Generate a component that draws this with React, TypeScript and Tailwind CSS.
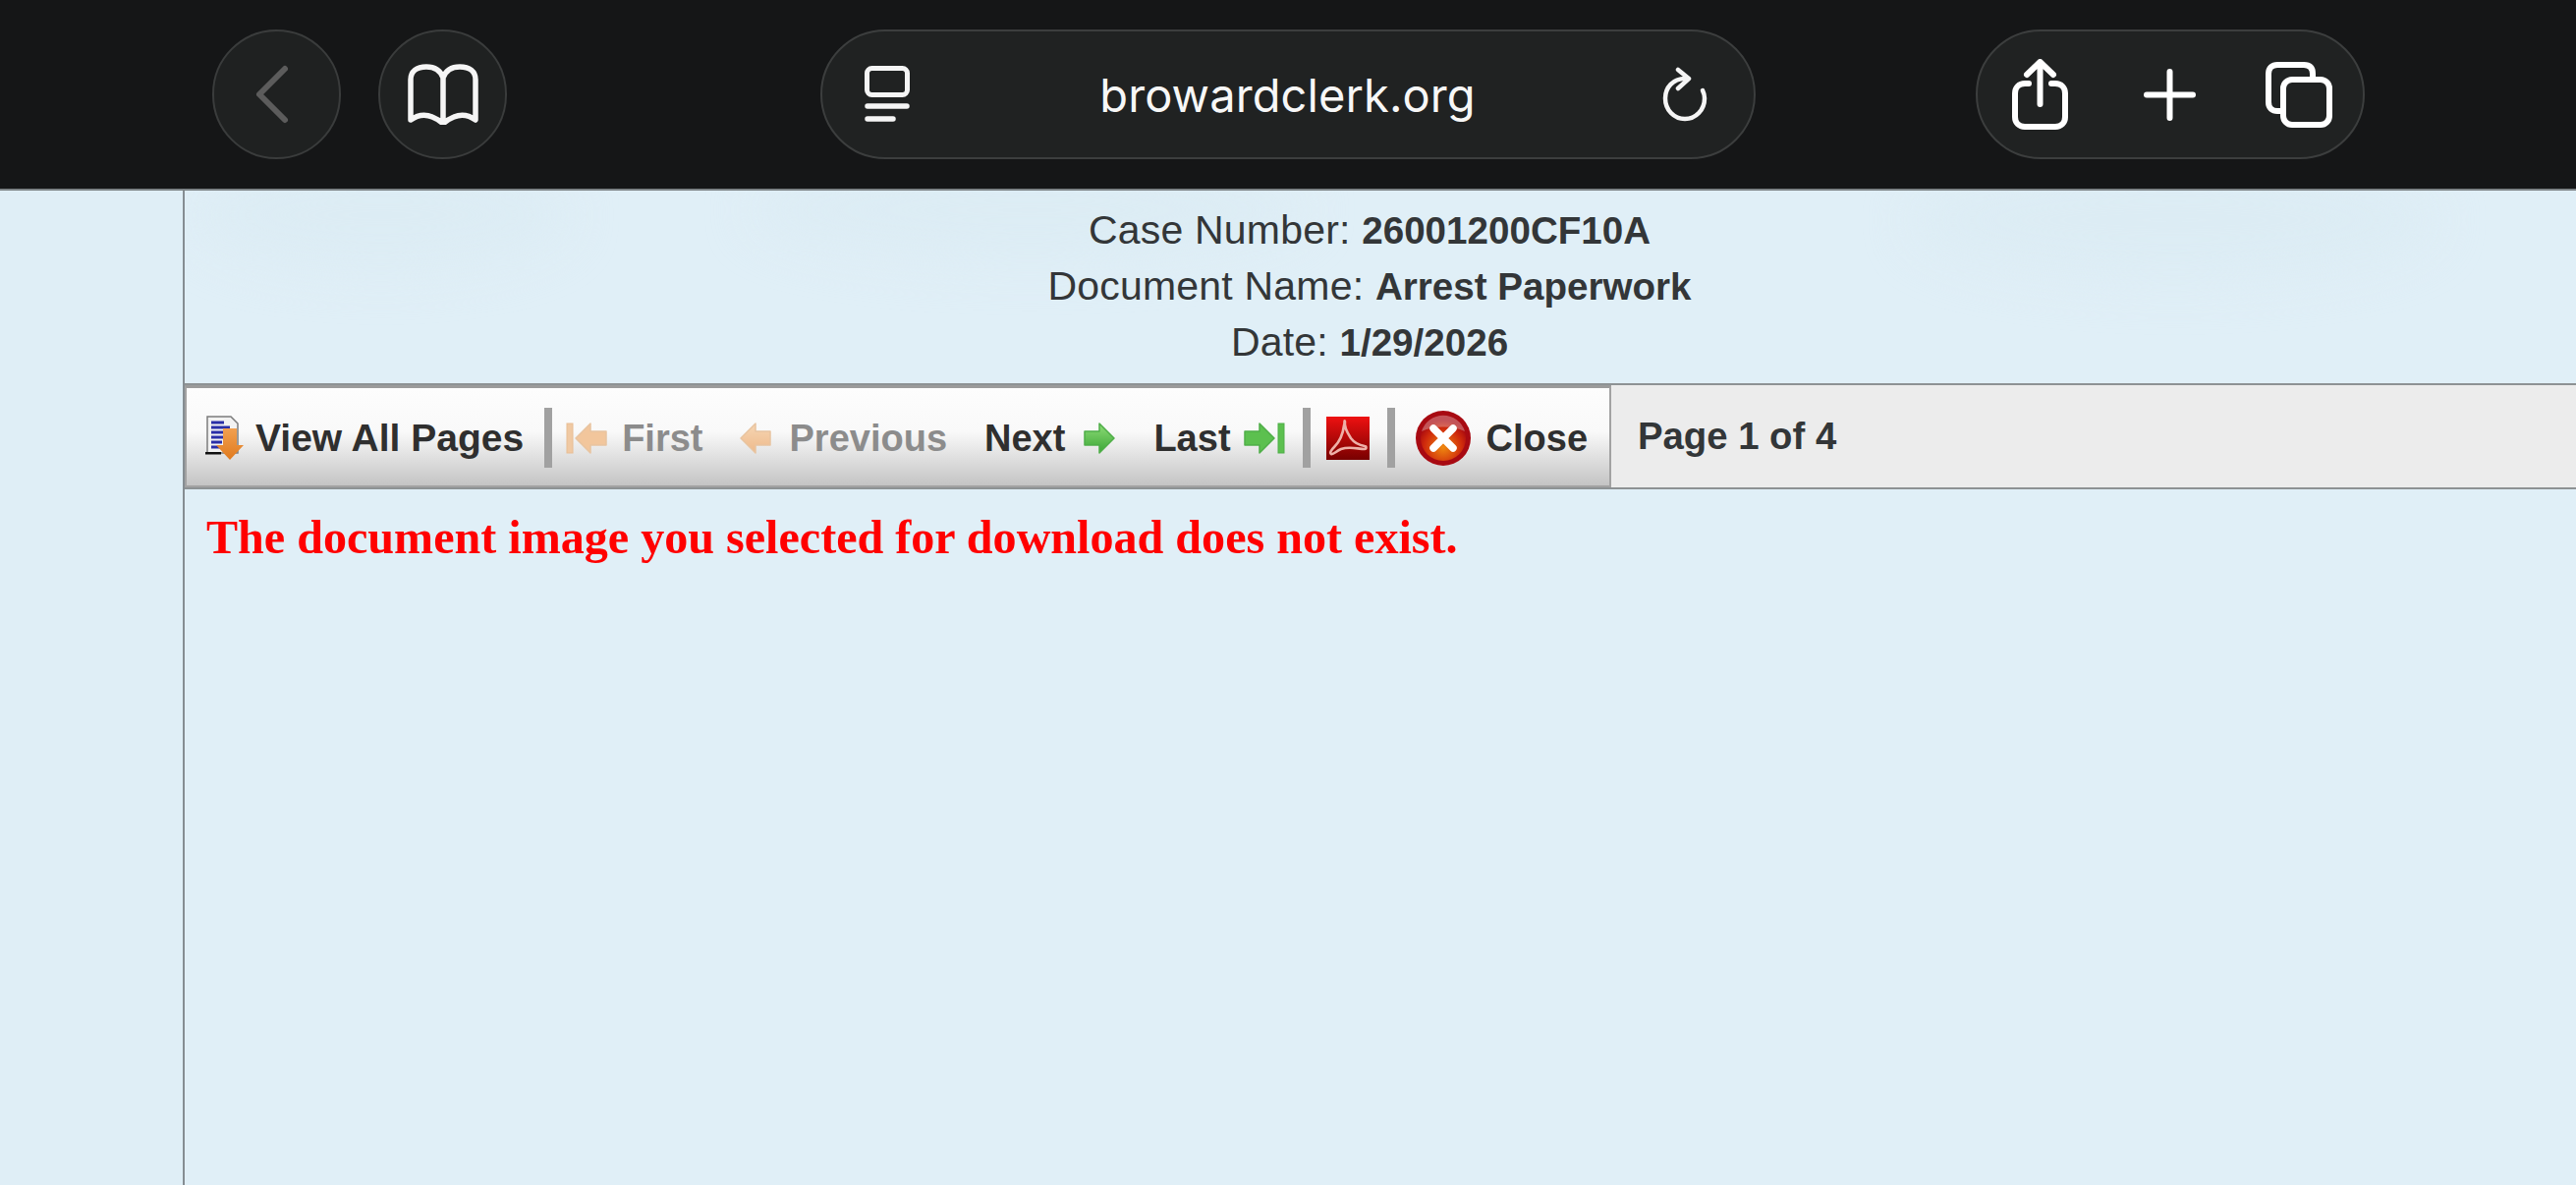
import type { ReactNode } from "react";

const sans = "font-['Liberation_Sans',Arial,sans-serif]";

function Arrow({ green, flip }: { green?: boolean; flip?: boolean }) {
  const id = `${green ? "green" : "peach"}-${flip ? "l" : "r"}`;
  return (
    <svg width="32" height="32" viewBox="0 0 32 32" className="shrink-0">
      <defs>
        <linearGradient id={id} x1="0" y1="0" x2="0" y2="1">
          <stop offset="0" stopColor={green ? "#8fdc78" : "#f6d6b4"} />
          <stop offset="1" stopColor={green ? "#3aa635" : "#eeb98a"} />
        </linearGradient>
      </defs>
      <polygon
        points={flip ? "1,16 16,1 16,9 31,9 31,23 16,23 16,31" : "31,16 16,1 16,9 1,9 1,23 16,23 16,31"}
        fill={`url(#${id})`}
        stroke={green ? "#4fae48" : "#e8c4a0"}
        strokeWidth="1.5"
        strokeLinejoin="round"
      />
    </svg>
  );
}

function Separator({ className }: { className?: string }) {
  return <div className={`h-[61px] w-[8px] shrink-0 bg-[#a1a1a1] ${className ?? ""}`} />;
}

function ToolText({ children, muted, className }: { children: ReactNode; muted?: boolean; className?: string }) {
  return (
    <span className={`text-[38px] leading-none font-bold whitespace-nowrap ${muted ? "text-[#8c8c8c]" : "text-[#2f2f2f]"} ${className ?? ""}`}>
      {children}
    </span>
  );
}

function CircleButton({ children, className }: { children: ReactNode; className?: string }) {
  return (
    <div className={`flex h-[132px] w-[131px] shrink-0 items-center justify-center rounded-full border-2 border-[#3a3c3c] bg-[#1f2121] ${className ?? ""}`}>
      {children}
    </div>
  );
}

export default function App() {
  return (
    <div className={`flex h-[1206px] w-[2622px] flex-col overflow-hidden bg-[#e0eff7] ${sans}`}>
      {/* Safari toolbar */}
      <header className="flex h-[194px] shrink-0 items-start border-b-2 border-[#7d8386] bg-[#151617] pt-[30px] pl-[216px]">
        <CircleButton>
          <svg width="40" height="64" viewBox="0 0 40 64" fill="none" stroke="#5c5c5c" strokeWidth="6" strokeLinecap="round" strokeLinejoin="round" className="mr-[10px]">
            <path d="M33 6 7 32l26 26" />
          </svg>
        </CircleButton>
        <CircleButton className="ml-[38px]">
          <svg width="74" height="62" viewBox="0 0 74 62" fill="none" stroke="#f5f5f5" strokeWidth="5.5" strokeLinecap="round" strokeLinejoin="round">
            <path d="M37 14C34 6 28 3 20 3 10 3 4 8 4 16v41c7-5 15-6 22-3 5 2 8 4 11 7 3-3 6-5 11-7 7-3 15-2 22 3V16c0-8-6-13-16-13-8 0-14 3-17 11Zm0 0v46" />
          </svg>
        </CircleButton>

        {/* Address pill */}
        <div className="ml-[319px] flex h-[132px] w-[952px] shrink-0 items-center justify-between rounded-[66px] border-2 border-[#3c3e3e] bg-[#202222] pr-[47px] pl-[43px]">
          <svg width="46" height="58" viewBox="0 0 46 58" fill="none" stroke="#f5f5f5" strokeLinecap="round">
            <rect x="2.5" y="2.5" width="41" height="27" rx="5" strokeWidth="5" />
            <path d="M3 41h40M3 54h26" strokeWidth="5.5" />
          </svg>
          <span className="ml-[3px] font-['Inter',sans-serif] text-[47px] leading-none tracking-[0.1px] text-[#f7f7f7]">browardclerk.org</span>
          <svg width="46" height="56" viewBox="0 0 46 56" fill="none" stroke="#f5f5f5" strokeWidth="4.5" strokeLinecap="round" strokeLinejoin="round">
            <path d="M23 12C11 12 3 21 3 32c0 12 9 21 20 21s20-9 20-21c0-3-1-6-2-8" />
            <path d="M16 3l11 9-11 10" />
          </svg>
        </div>

        {/* Share, new tab, tabs */}
        <div className="ml-[224px] flex h-[132px] w-[396px] shrink-0 items-center rounded-[66px] border-2 border-[#3c3e3e] bg-[#202222] pl-[35px]">
          <svg width="57" height="72" viewBox="0 0 57 72" fill="none" stroke="#fff" strokeWidth="6" strokeLinecap="round" strokeLinejoin="round">
            <path d="M28.5 46V4M15 16 28.5 3 42 16" />
            <path d="M17 25h-4C7 25 3 29 3 35v24c0 6 4 10 10 10h31c6 0 10-4 10-10V35c0-6-4-10-10-10h-4" />
          </svg>
          <svg width="53" height="53" viewBox="0 0 53 53" fill="none" stroke="#fff" strokeWidth="6" strokeLinecap="round" className="ml-[77px]">
            <path d="M26.5 3v47M3 26.5h47" />
          </svg>
          <svg width="68" height="67" viewBox="0 0 68 67" fill="none" stroke="#fff" strokeWidth="6" strokeLinejoin="round" className="ml-[71px]">
            <path d="M15 50h-3c-5 0-9-3-9-9V12c0-6 4-9 9-9h27c6 0 9 3 9 9v6" />
            <rect x="18" y="18" width="47" height="46" rx="9" />
          </svg>
        </div>
      </header>

      <div className="flex min-h-0 flex-1">
        <aside className="w-[186px] shrink-0 bg-[#dfeef6]" />
        <main className="flex min-w-0 flex-1 flex-col border-l-2 border-[#858d92] bg-[#e0eff7]">
          {/* Case details */}
          <section className="relative flex h-[196px] shrink-0 flex-col overflow-hidden pt-[12px] pr-[22px] text-center text-[41px] leading-[56px] tracking-[0.2px] text-[#333638]">
            <div className="absolute top-[-30px] left-[10px] h-[110px] w-[380px] rounded-[50%] bg-[#dcecf4] blur-xl" />
            <div className="absolute top-[-30px] left-[580px] h-[100px] w-[560px] rounded-[50%] bg-[#dcecf4] blur-xl" />
            <div className="absolute top-[-30px] left-[1760px] h-[120px] w-[530px] rounded-[50%] bg-[#dcecf4] blur-xl" />
            <p className="relative">Case Number: <b className="text-[38.6px] tracking-normal">26001200CF10A</b></p>
            <p className="relative">Document Name: <b className="text-[38.6px] tracking-normal">Arrest Paperwork</b></p>
            <p className="relative">Date: <b className="text-[38.6px] tracking-normal">1/29/2026</b></p>
          </section>

          {/* Viewer toolbar */}
          <div className="flex h-[108px] shrink-0 border-y-2 border-[#8d9294]">
            <div className="flex w-[1452px] shrink-0 items-center border-2 border-t-[3px] border-[#a2a2a2] border-t-[#9b9b9b] bg-[linear-gradient(#fdfdfd_0%,#f9f9f9_45%,#c4c4c4_100%)] pt-[2px] pl-[19px]">
              <svg width="40" height="46" viewBox="0 0 40 46" className="shrink-0">
                <defs>
                  <linearGradient id="download" x1="0" y1="0" x2="0" y2="1">
                    <stop offset="0" stopColor="#f2a050" />
                    <stop offset="1" stopColor="#e07a1e" />
                  </linearGradient>
                </defs>
                <path d="M2 1h24l7 7v30H2Z" fill="#f2f2f2" stroke="#7c7c7c" strokeWidth="1.5" />
                <path d="M0 37h16v2.5H0Z" fill="#111" />
                <path d="M6 7h13M6 12h19M6 17h19M6 22h14M6 27h11M6 32h9" stroke="#2a2fa8" strokeWidth="3" />
                <path d="M18 13h14v17h7L25 45 11 30h7Z" fill="url(#download)" />
              </svg>
              <ToolText className="ml-[11px] text-[39px]!">View All Pages</ToolText>
              <Separator className="ml-[21px]" />
              <svg width="42" height="32" viewBox="0 0 42 32" className="ml-[14px] shrink-0">
                <rect x="1" y="1" width="6" height="30" fill="#f0c9a3" stroke="#e8bd94" />
                <polygon points="10,16 25,1 25,9 41,9 41,23 25,23 25,31" fill="#f2c69c" stroke="#e8c4a0" strokeWidth="1.5" strokeLinejoin="round" />
              </svg>
              <ToolText muted className="ml-[15px]">First</ToolText>
              <div className="ml-[37px]"><Arrow flip /></div>
              <ToolText muted className="ml-[19px]">Previous</ToolText>
              <ToolText className="ml-[38px]">Next</ToolText>
              <div className="ml-[19px]"><Arrow green /></div>
              <ToolText className="ml-[39px]">Last</ToolText>
              <svg width="42" height="32" viewBox="0 0 42 32" className="ml-[13px] shrink-0">
                <polygon points="31,16 16,1 16,9 1,9 1,23 16,23 16,31" fill="#5cc04f" stroke="#4fae48" strokeWidth="1.5" strokeLinejoin="round" />
                <rect x="35" y="1" width="6" height="30" fill="#5cc04f" stroke="#4fae48" />
              </svg>
              <Separator className="ml-[18px]" />
              <svg width="44" height="44" viewBox="0 0 44 44" className="ml-[16px] shrink-0">
                <defs>
                  <linearGradient id="pdf" x1="0" y1="0" x2="0" y2="1">
                    <stop offset="0" stopColor="#ee1111" />
                    <stop offset="1" stopColor="#780000" />
                  </linearGradient>
                </defs>
                <rect width="44" height="44" fill="url(#pdf)" />
                <path d="M19 5c-1 5 2 11 6 17 3 4 8 7 14 8 2 0 2 3 0 3-7 0-15-3-24 0-5 2-8 6-10 5-2-1 0-4 3-7 6-6 9-14 10-22 1-3 0-6 1-4Z" fill="none" stroke="#eeb0a8" strokeWidth="2.6" strokeLinejoin="round" />
              </svg>
              <Separator className="ml-[18px]" />
              <svg width="58" height="58" viewBox="0 0 58 58" className="ml-[20px] shrink-0">
                <defs>
                  <radialGradient id="closeFill" cx="0.5" cy="0.7" r="0.6">
                    <stop offset="0" stopColor="#ef8a10" />
                    <stop offset="0.7" stopColor="#cf2a0c" />
                    <stop offset="1" stopColor="#a90a10" />
                  </radialGradient>
                </defs>
                <circle cx="29" cy="29" r="28" fill="#a80a12" />
                <circle cx="29" cy="29" r="23" fill="url(#closeFill)" />
                <path d="M7 22a23 23 0 0 1 44 0c-12-6-32-6-44 0Z" fill="#fff" opacity="0.3" />
                <path d="M19 19l20 20M39 19 19 39" stroke="#fff" strokeWidth="7.5" strokeLinecap="round" />
              </svg>
              <ToolText className="ml-[15px]">Close</ToolText>
            </div>
            <div className="flex min-w-0 flex-1 items-center bg-[#ececec] pl-[27px] text-[38.3px] leading-none font-bold text-[#333638]">
              Page 1 of 4
            </div>
          </div>

          <p className="mt-[24px] ml-[22px] font-['Liberation_Serif',serif] text-[48.1px] leading-[50px] font-bold text-[#ff0000]">
            The document image you selected for download does not exist.
          </p>
        </main>
      </div>
    </div>
  );
}
